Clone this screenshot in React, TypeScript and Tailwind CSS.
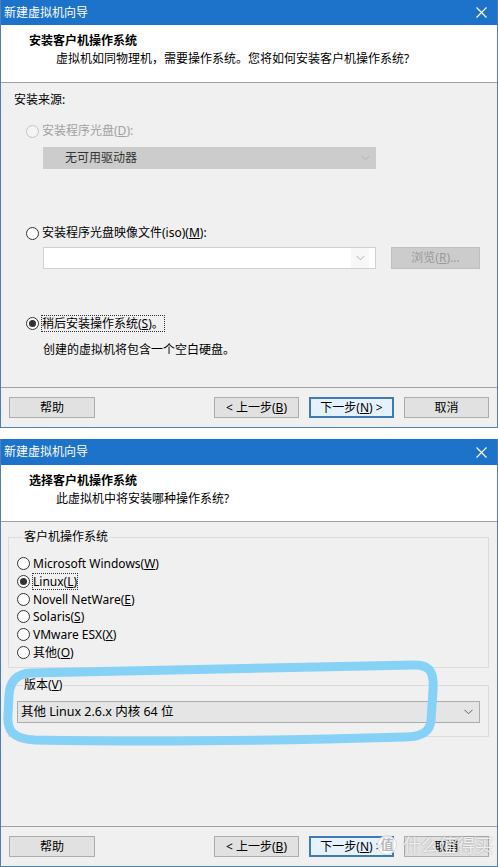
import React from 'react';

function Radio({ checked = false, disabled = false }: { checked?: boolean; disabled?: boolean }) {
  return (
    <span
      className={`w-[13px] h-[13px] rounded-full border flex items-center justify-center shrink-0 ${
        disabled ? 'border-[#c4c4c4] bg-[#f4f4f4]' : 'border-[#333333] bg-white'
      }`}
    >
      {checked && <span className="w-[7px] h-[7px] rounded-full bg-[#333333]" />}
    </span>
  );
}

function Chevron({ color = '#606060' }: { color?: string }) {
  return (
    <svg width="9" height="6" viewBox="0 0 9 6" className="shrink-0">
      <path d="M0.5 0.8 L4.5 4.8 L8.5 0.8" fill="none" stroke={color} strokeWidth="1" />
    </svg>
  );
}

function Btn({ children, focused = false, wide = false }: { children: React.ReactNode; focused?: boolean; wide?: boolean }) {
  return (
    <div
      className={`h-[21px] flex items-center justify-center text-[12px] leading-none ${wide ? 'w-[86px]' : 'w-[85px]'} ${
        focused ? 'border-2 border-[#3f7bb0] bg-[#e5f1fb]' : 'border border-[#adadad] bg-[#e1e1e1]'
      }`}
    >
      {children}
    </div>
  );
}

function Dialog({
  titleH,
  headerH,
  heading,
  sub,
  children,
  footerExtra,
}: {
  titleH: string;
  headerH: string;
  heading: string;
  sub: string;
  children: React.ReactNode;
  footerExtra?: React.ReactNode;
}) {
  return (
    <div className="w-[498px] border-x border-b border-[#4f7fb3] flex flex-col shrink-0">
      {/* 타이틀 바 */}
      <div className={`${titleH} bg-[#1d72ca] flex items-center justify-between pl-[3px] pr-[10px]`}>
        <span className="text-white text-[12px]">新建虚拟机向导</span>
        <svg width="11" height="11" viewBox="0 0 11 11">
          <path d="M0.5 0.5 L10.5 10.5 M10.5 0.5 L0.5 10.5" stroke="white" strokeWidth="1.2" />
        </svg>
      </div>
      <div className={`${headerH} bg-white border-b border-[#a0a0a0] pl-[28px] pt-[8px]`}>
        <p className="h-[16px] leading-[16px] text-[12px] font-bold">{heading}</p>
        <p className="h-[16px] leading-[16px] text-[12px] mt-[2px] pl-[27px]">{sub}</p>
      </div>
      <div className="h-[304px] bg-[#f0f0f0] flex flex-col">{children}</div>
      <div className="relative h-[40px] bg-[#f0f0f0] border-t border-[#a0a0a0] flex items-center pl-[8px] pr-[8px]">
        <Btn wide>帮助</Btn>
        <div className="ml-auto flex gap-[10px]">
          <Btn>
            &lt; 上一步(<u>B</u>)
          </Btn>
          <Btn focused>
            下一步(<u>N</u>) &gt;
          </Btn>
          <Btn>取消</Btn>
        </div>
        {footerExtra}
      </div>
    </div>
  );
}

export default function App() {
  const osList = [
    { label: 'Microsoft Windows', key: 'W' },
    { label: 'Linux', key: 'L', checked: true },
    { label: 'Novell NetWare', key: 'E' },
    { label: 'Solaris', key: 'S' },
    { label: 'VMware ESX', key: 'X' },
    { label: '其他', key: 'O' },
  ];

  return (
    <div className="relative w-[498px] h-[867px] overflow-hidden bg-white flex flex-col text-black font-['Noto_Sans','Noto_Sans_CJK_SC',sans-serif]">
      <Dialog titleH="h-[25px]" headerH="h-[58px]" heading="安装客户机操作系统" sub="虚拟机如同物理机，需要操作系统。您将如何安装客户机操作系统?">
        <div className="px-[13px] pt-[9px] flex flex-col text-[12px]">
          <p className="h-[16px] leading-[16px]">安装来源:</p>
          <div className="mt-[15px] ml-[12px] h-[16px] flex items-center gap-[3px]">
            <Radio disabled />
            <span className="text-[#a0a0a0] leading-[16px]">
              安装程序光盘(<u>D</u>):
            </span>
          </div>
          <div className="mt-[8px] ml-[29px] w-[333px] h-[22px] bg-[#cccccc] flex items-center pl-[22px] pr-[6px]">
            <span className="flex-1 text-[#333333]">无可用驱动器</span>
            <Chevron color="#b0b0b0" />
          </div>
          <div className="mt-[56px] ml-[12px] h-[16px] flex items-center gap-[3px]">
            <Radio />
            <span className="leading-[16px]">
              安装程序光盘映像文件(iso)(<u>M</u>):
            </span>
          </div>
          <div className="mt-[6px] ml-[29px] h-[22px] flex items-center gap-[15px]">
            <div className="w-[333px] h-[22px] bg-white border border-[#d0d0d0] flex items-center justify-end pr-[6px]">
              <div className="h-full w-[18px] bg-[#f7f7f7] flex items-center justify-center">
                <Chevron color="#b0b0b0" />
              </div>
            </div>
            <div className="w-[89px] h-[22px] bg-[#cccccc] border border-[#bfbfbf] flex items-center justify-center text-[#9a9a9a]">
              浏览(<u>R</u>)...
            </div>
          </div>
          <div className="mt-[46px] ml-[12px] h-[16px] flex items-center gap-[3px]">
            <Radio checked />
            <span className="leading-[15px] outline-1 outline-dotted outline-[#333333]">
              稍后安装操作系统(<u>S</u>)。
            </span>
          </div>
          <p className="mt-[11px] ml-[29px] h-[16px] leading-[16px]">创建的虚拟机将包含一个空白硬盘。</p>
        </div>
      </Dialog>

      <div className="h-[11px] shrink-0" />

      <Dialog
        titleH="h-[26px]"
        headerH="h-[57px]"
        heading="选择客户机操作系统"
        sub="此虚拟机中将安装哪种操作系统?"
        footerExtra={
          <div className="absolute right-[4px] top-[8px] flex items-center gap-[6px] pointer-events-none">
            <span className="w-[20px] h-[20px] rounded-full bg-white/85 border border-[#d8d8d8] flex items-center justify-center text-[13px] text-[#b8b8b8] font-bold">
              值
            </span>
            <span className="text-[18px] leading-none text-white/80 [text-shadow:0_0_2px_rgba(0,0,0,0.35)]">
              什么值得买
            </span>
          </div>
        }
      >
        <div className="pl-[7px] pr-[8px] pt-[7px] flex flex-col text-[12px]">
          <fieldset className="border border-[#dcdcdc] pl-[8px] pt-[1px] pb-[6px]">
            <legend className="ml-[6px] px-[1px] h-[16px] leading-[16px]">客户机操作系统</legend>
            <div className="mt-[9px] flex flex-col">
              {osList.map((os) => (
                <div key={os.key} className="h-[17.7px] flex items-center gap-[3px]">
                  <Radio checked={os.checked} />
                  <span className={`leading-[15px] ${os.checked ? 'outline-1 outline-dotted outline-[#333333]' : ''}`}>
                    {os.label}(<u>{os.key}</u>)
                  </span>
                </div>
              ))}
            </div>
          </fieldset>
          <fieldset className="mt-[9px] border border-[#dcdcdc] px-[8px] pb-[13px]">
            <legend className="ml-[6px] px-[1px] h-[16px] leading-[16px]">
              版本(<u>V</u>)
            </legend>
            <div className="mt-[8px] h-[22px] bg-[#e5e5e5] border border-[#acacac] flex items-center pl-[3px] pr-[6px]">
              <span className="flex-1 text-[12.5px]">其他 Linux 2.6.x 内核 64 位</span>
              <Chevron />
            </div>
          </fieldset>
        </div>
      </Dialog>

      {/* 형광펜 표시 */}
      <svg className="absolute left-0 top-0 pointer-events-none" width="498" height="867" viewBox="0 0 498 867">
        <path
          d="M30 673 C150 670 300 668 415 665 C432 665 434 675 433 690 L431 720 C430 733 420 737 405 737 C300 740 150 742 35 740 C12 739 7 730 8 715 L9 695 C10 680 18 674 30 673 Z"
          fill="none"
          stroke="#85d2f6"
          strokeWidth="9"
          strokeLinejoin="round"
        />
      </svg>
    </div>
  );
}
